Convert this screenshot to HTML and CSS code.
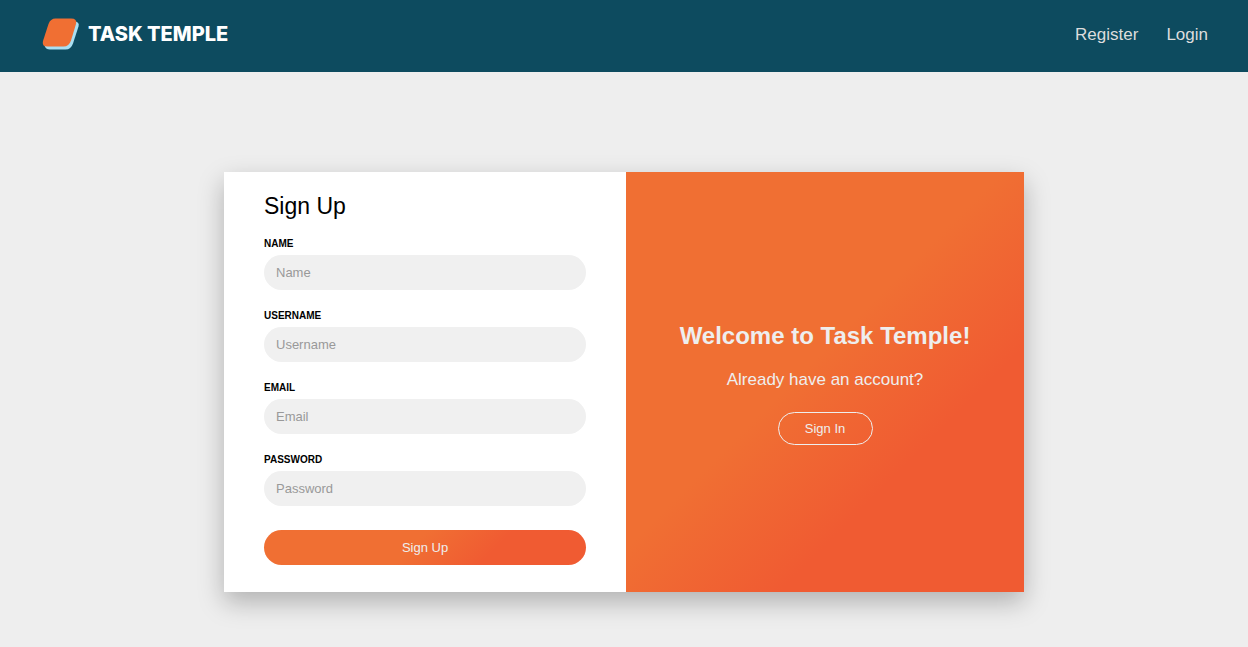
FILE: index.html
```
<!DOCTYPE html>
<html lang="en">
<head>
  <meta charset="utf-8">
  <meta name="viewport" content="width=device-width, initial-scale=1">
  <title>Task Temple</title>
  <link rel="stylesheet" href="styles.css">
</head>
<body>
  <header class="header">
    <a class="brand" href="#">
      <svg class="brand-mark" viewBox="0 0 40 34" aria-hidden="true">
        <path fill="#a9dff2" d="M15 4.500H33.500Q40 4.500 38.500 9.500L33 26.500Q31 32.500 25.500 32.500H10Q5.500 32.500 4.500 28.500Z"/>
        <path fill="#f06f33" d="M15.500 1.500H31Q37.500 1.500 36 7L31 23.500Q29 29.500 23.500 29.500H7.500Q1.500 29.500 3 24L8.500 7Q10.500 1.500 15.500 1.500Z"/>
      </svg>
      <span class="brand-name">TASK TEMPLE</span>
    </a>
    <nav class="nav">
      <a class="nav-link" href="#register">Register</a>
      <a class="nav-link" href="#login">Login</a>
    </nav>
  </header>
  <main class="main">
    <div class="card">
      <form class="signup" id="register">
        <h1 class="signup-title">Sign Up</h1>
        <div class="field">
          <label class="field-label" for="name">NAME</label>
          <input class="field-input" id="name" type="text" placeholder="Name">
        </div>
        <div class="field">
          <label class="field-label" for="username">USERNAME</label>
          <input class="field-input" id="username" type="text" placeholder="Username">
        </div>
        <div class="field">
          <label class="field-label" for="email">EMAIL</label>
          <input class="field-input" id="email" type="email" placeholder="Email">
        </div>
        <div class="field">
          <label class="field-label" for="password">PASSWORD</label>
          <input class="field-input" id="password" type="password" placeholder="Password">
        </div>
        <button class="submit" type="submit">Sign Up</button>
      </form>
      <section class="welcome" id="login">
        <h2 class="welcome-title">Welcome to Task Temple!</h2>
        <p class="welcome-text">Already have an account?</p>
        <button class="signin" type="button">Sign In</button>
      </section>
    </div>
  </main>
</body>
</html>
```
FILE: styles.css
```
* {
  box-sizing: border-box;
}

body {
  margin: 0;
  background: #eee;
  color: #000;
  font-family: "Liberation Sans", Arial, sans-serif;
}

.header {
  display: flex;
  align-items: center;
  justify-content: space-between;
  min-height: 72px;
  padding: 0 40px;
  background: #0d4b5f;
}

.brand {
  display: flex;
  align-items: center;
  gap: 8px;
  padding-bottom: 4px;
  color: #fff;
  text-decoration: none;
}

.brand-mark {
  width: 40px;
  height: 34px;
}

.brand-name {
  font-family: Inter, sans-serif;
  font-size: 20px;
  font-weight: 800;
  line-height: 28px;
}

.nav {
  display: flex;
  gap: 28px;
  padding-bottom: 2px;
}

.nav-link {
  color: #ddd;
  font-size: 17px;
  line-height: 24px;
  text-decoration: none;
}

.main {
  padding: 100px 24px 55px;
}

.card {
  display: grid;
  grid-template-columns: 402fr 398fr;
  max-width: 800px;
  margin: 0 auto;
  background: #fff;
  box-shadow: 0 10px 24px rgba(0, 0, 0, 0.26);
}

.signup {
  padding: 20px 40px 27px;
}

.signup-title {
  margin: 0 0 18px;
  font-size: 23px;
  font-weight: 400;
  line-height: 28px;
}

.field {
  display: flex;
  flex-direction: column;
  gap: 5px;
  margin-bottom: 20px;
}

.field-label {
  font-size: 10px;
  font-weight: 700;
  line-height: 12px;
}

.field-input {
  width: 100%;
  height: 35px;
  padding: 0 12px;
  border: 0;
  border-radius: 18px;
  background: #f0f0f0;
  font-family: inherit;
  font-size: 13px;
}

.field-input::placeholder {
  color: #999;
}

.submit {
  width: 100%;
  height: 35px;
  margin-top: 4px;
  border: 0;
  border-radius: 18px;
  background: linear-gradient(135deg, #f06f33 46%, #f05b32 70%);
  color: #eee;
  font-family: inherit;
  font-size: 13px;
}

.welcome {
  display: flex;
  flex-direction: column;
  align-items: center;
  justify-content: center;
  padding: 20px;
  background: linear-gradient(135deg, #f06f33 46%, #f05b32 70%);
  color: #eee;
  text-align: center;
}

.welcome-title {
  margin: 0 0 16px;
  font-size: 24px;
  line-height: 32px;
}

.welcome-text {
  margin: 0 0 20px;
  font-size: 17px;
  line-height: 24px;
}

.signin {
  min-width: 95px;
  height: 33px;
  padding: 0 20px;
  border: 1px solid #eee;
  border-radius: 17px;
  background: transparent;
  color: #eee;
  font-family: inherit;
  font-size: 13px;
}
```
